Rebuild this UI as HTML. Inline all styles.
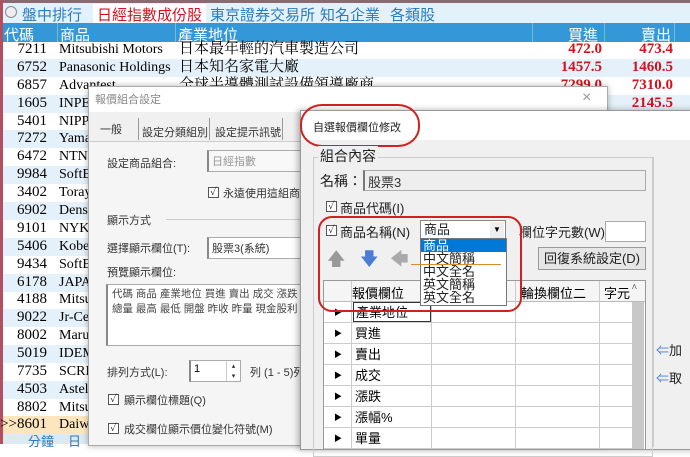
<!DOCTYPE html><html><head><meta charset="utf-8"><style>
*{margin:0;padding:0;box-sizing:border-box}
body{width:690px;height:444px;overflow:hidden;position:relative;background:#fff;font-family:"Liberation Serif","Noto Serif CJK SC",serif}
.a{position:absolute;white-space:nowrap}
.s{font-family:"Liberation Sans","Noto Sans CJK TC",sans-serif}
.row{position:absolute;left:3px;width:687px;height:17.9px;font-size:14px;line-height:17.9px}
.row .c{position:absolute;right:643px;font-size:15px}
.row .n{position:absolute;left:56px}
.row .b{position:absolute;right:88px;color:#d4121c;font-weight:bold;font-size:15px}
.row .e{position:absolute;right:17px;color:#d4121c;font-weight:bold;font-size:15px}
.cb{position:absolute;width:11px;height:11px;border:1px solid #555;background:#fff;font-size:10px;line-height:9px;text-align:center;color:#000}
.gr{position:absolute;left:0;width:323px;height:21px;border-bottom:1px solid #ccc;font-size:13px;line-height:21px}
</style></head><body>
<div class="a" style="left:0;top:0;width:690px;height:3px;background:#8a6a70"></div>
<div class="a" style="left:0;top:0;width:3px;height:444px;background:#b05060"></div>
<div class="a" style="left:3px;top:3px;width:687px;height:20px;background:#e3f1fb"></div>
<div class="a" style="left:5px;top:6px;width:12px;height:12px;border-radius:6px;border:1px solid #889;background:#eee"></div>
<div class="a s" style="left:22px;top:4px;font-size:15px;color:#2a7bbf">盤中排行</div>
<div class="a s" style="left:93px;top:4px;font-size:15px;color:#d4121c;background:#fff;padding:0 4px">日經指數成份股</div>
<div class="a s" style="left:210px;top:4px;font-size:15px;color:#2a7bbf">東京證券交易所</div>
<div class="a s" style="left:320px;top:4px;font-size:15px;color:#2a7bbf">知名企業</div>
<div class="a s" style="left:390px;top:4px;font-size:15px;color:#2a7bbf">各類股</div>
<div class="a" style="left:3px;top:23px;width:687px;height:19px;background:#3498d8"></div>
<div class="a s" style="left:4px;top:24px;font-size:15px;color:#fff">代碼</div>
<div class="a s" style="left:60px;top:24px;font-size:15px;color:#fff">商品</div>
<div class="a s" style="left:178px;top:24px;font-size:15px;color:#fff">產業地位</div>
<div class="a s" style="left:568px;top:24px;font-size:15px;color:#fff">買進</div>
<div class="a s" style="left:641px;top:24px;font-size:15px;color:#fff">賣出</div>
<div class="a" style="left:57px;top:23px;width:1px;height:19px;background:#7bc"></div>
<div class="a" style="left:175px;top:23px;width:1px;height:19px;background:#7bc"></div>
<div class="a" style="left:532px;top:23px;width:1px;height:19px;background:#7bc"></div>
<div class="a" style="left:604px;top:23px;width:1px;height:19px;background:#7bc"></div>
<div class="a" style="left:674px;top:23px;width:1px;height:19px;background:#7bc"></div>

<div class="row" style="top:41px"><span class="c">7211</span><span class="n">Mitsubishi Motors</span><span class="n" style="left:176px;font-size:15px">日本最年輕的汽車製造公司</span><span class="b">472.0</span><span class="e">473.4</span></div>
<div class="row" style="top:59px;background:#e5f1fa"><span class="c">6752</span><span class="n">Panasonic Holdings</span><span class="n" style="left:176px;font-size:15px">日本知名家電大廠</span><span class="b">1457.5</span><span class="e">1460.5</span></div>
<div class="row" style="top:77px"><span class="c">6857</span><span class="n">Advantest</span><span class="n" style="left:176px;font-size:15px">全球半導體測試設備領導廠商</span><span class="b">7299.0</span><span class="e">7310.0</span></div>
<div class="row" style="top:95px;background:#e5f1fa"><span class="c">1605</span><span class="n">INPEX</span><span class="e">2145.5</span></div>
<div class="row" style="top:113px"><span class="c">5401</span><span class="n">NIPPON</span></div>
<div class="row" style="top:130px;background:#e5f1fa"><span class="c">7272</span><span class="n">Yamaha</span></div>
<div class="row" style="top:148px"><span class="c">6472</span><span class="n">NTN</span></div>
<div class="row" style="top:166px;background:#e5f1fa"><span class="c">9984</span><span class="n">SoftBank</span></div>
<div class="row" style="top:184px"><span class="c">3402</span><span class="n">Toray</span></div>
<div class="row" style="top:202px;background:#e5f1fa"><span class="c">6902</span><span class="n">Denso</span></div>
<div class="row" style="top:220px"><span class="c">9101</span><span class="n">NYK</span></div>
<div class="row" style="top:238px;background:#e5f1fa"><span class="c">5406</span><span class="n">Kobe</span></div>
<div class="row" style="top:256px"><span class="c">9434</span><span class="n">SoftBank</span></div>
<div class="row" style="top:274px;background:#e5f1fa"><span class="c">6178</span><span class="n">JAPAN</span></div>
<div class="row" style="top:291px"><span class="c">4188</span><span class="n">Mitsubishi</span></div>
<div class="row" style="top:309px;background:#e5f1fa"><span class="c">9022</span><span class="n">Jr-Central</span></div>
<div class="row" style="top:327px"><span class="c">8002</span><span class="n">Marubeni</span></div>
<div class="row" style="top:345px;background:#e5f1fa"><span class="c">5019</span><span class="n">IDEMITSU</span></div>
<div class="row" style="top:363px"><span class="c">7735</span><span class="n">SCREEN</span></div>
<div class="row" style="top:381px;background:#e5f1fa"><span class="c">4503</span><span class="n">Astellas</span></div>
<div class="row" style="top:399px"><span class="c">8802</span><span class="n">Mitsui</span></div>
<div class="row" style="top:416px;background:#fde6bd"><span class="c">&gt;&gt;8601</span><span class="n">Daiwa</span></div>
<div class="a" style="left:3px;top:434px;width:687px;height:10px;background:#dde9f3"></div>
<div class="a s" style="left:28px;top:431px;font-size:13px;color:#2a7bbf">分鐘</div>
<div class="a s" style="left:68px;top:431px;font-size:13px;color:#2a7bbf">日</div>

<!-- dialog 1 -->
<div class="a" style="left:88px;top:86px;width:520px;height:360px;background:#f5f5f5;border:1px solid #aaa;box-shadow:0 0 6px rgba(0,0,0,.3)"></div>
<div class="a" style="left:89px;top:87px;width:518px;height:25px;background:#fff"></div>
<div class="a s" style="left:95px;top:91px;font-size:11px;color:#888">報價組合設定</div>
<div class="a s" style="left:582px;top:89px;font-size:16px;color:#999">×</div>
<div class="a" style="left:89px;top:112px;width:518px;height:30px;background:#f0f0f0;border-bottom:1px solid #ccc"></div>
<div class="a s" style="left:100px;top:121px;font-size:11px;color:#333">一般</div>
<div class="a" style="left:138px;top:118px;width:1px;height:22px;background:#999"></div>
<div class="a s" style="left:142px;top:124px;font-size:11px;color:#333">設定分類組別</div>
<div class="a" style="left:209px;top:118px;width:1px;height:22px;background:#999"></div>
<div class="a s" style="left:215px;top:124px;font-size:11px;color:#333">設定提示訊號</div>
<div class="a" style="left:282px;top:118px;width:1px;height:22px;background:#999"></div>
<div class="a s" style="left:107px;top:155px;font-size:11px;color:#333">設定商品組合:</div>
<div class="a s" style="left:207px;top:150px;width:100px;height:22px;border:1px solid #aaa;border-left:2px solid #888;background:#f8f8f8;font-size:11px;color:#999;padding:2px 3px">日經指數</div>
<div class="cb" style="left:208px;top:187px">✓</div>
<div class="a s" style="left:223px;top:185px;font-size:11px;color:#333">永遠使用這組商品</div>
<div class="a s" style="left:107px;top:212px;font-size:11px;color:#333">顯示方式</div>
<div class="a" style="left:166px;top:219px;width:140px;height:1px;background:#ccc"></div>
<div class="a s" style="left:107px;top:240px;font-size:11px;color:#333">選擇顯示欄位(T):</div>
<div class="a s" style="left:207px;top:237px;width:100px;height:22px;border:1px solid #aaa;border-left:2px solid #888;background:#fff;font-size:11px;color:#333;padding:2px 3px">股票3(系統)</div>
<div class="a s" style="left:107px;top:264px;font-size:11px;color:#333">預覽顯示欄位:</div>
<div class="a s" style="left:106px;top:284px;width:202px;height:62px;border:1px solid #aaa;border-left:2px solid #888;background:#fff;font-size:10.5px;color:#444;padding:2px 4px;line-height:15px;overflow:hidden">代碼 商品 產業地位 買進 賣出 成交 漲跌 漲<br>總量 最高 最低 開盤 昨收 昨量 現金股利 現</div>
<div class="a s" style="left:107px;top:364px;font-size:11px;color:#333">排列方式(L):</div>
<div class="a s" style="left:189px;top:360px;width:52px;height:22px;border:1px solid #aaa;border-left:2px solid #888;background:#fff;font-size:11px;padding:2px 3px">1</div>
<div class="a" style="left:226px;top:361px;width:14px;height:20px;border-left:1px solid #ccc;font-size:7px;text-align:center;line-height:10px;color:#333">▴<br>▾</div>
<div class="a s" style="left:250px;top:364px;font-size:11px;color:#333">列 (1 - 5)列</div>
<div class="cb" style="left:108px;top:394px">✓</div>
<div class="a s" style="left:124px;top:392px;font-size:11px;color:#333">顯示欄位標題(Q)</div>
<div class="cb" style="left:108px;top:423px">✓</div>
<div class="a s" style="left:124px;top:421px;font-size:11px;color:#333">成交欄位顯示價位變化符號(M)</div>

<!-- dialog 2 -->
<div class="a" style="left:300px;top:110px;width:400px;height:340px;background:#f0f0f0;border:1px solid #999;box-shadow:-2px 0 6px rgba(0,0,0,.3)"></div>
<div class="a" style="left:301px;top:111px;width:399px;height:29px;background:#fff"></div>
<div class="a s" style="left:313px;top:119px;font-size:11px;color:#222">自選報價欄位修改</div>
<div class="a" style="left:300px;top:104px;width:120px;height:43px;border:2px solid #d02020;border-radius:22px/20px"></div>
<div class="a" style="left:313px;top:157px;width:340px;height:300px;border:1px solid #ccc"></div>
<div class="a s" style="left:318px;top:146px;font-size:14px;color:#222;background:#f0f0f0;padding:0 2px">組合內容</div>
<div class="a s" style="left:320px;top:171px;font-size:14px;color:#222">名稱：</div>
<div class="a s" style="left:363px;top:170px;width:283px;height:21px;border:1px solid #aaa;border-left:2px solid #777;background:#eee;font-size:13px;color:#333;padding:1px 3px">股票3</div>
<div class="cb" style="left:326px;top:201px">✓</div>
<div class="a s" style="left:340px;top:198px;font-size:13px;color:#222">商品代碼(I)</div>
<div class="cb" style="left:326px;top:225px">✓</div>
<div class="a s" style="left:340px;top:222px;font-size:13px;color:#222">商品名稱(N)</div>
<div class="a s" style="left:420px;top:220px;width:86px;height:20px;border:1px solid #888;background:#fff;font-size:13px;color:#222;padding:0 3px;line-height:18px">商品</div>
<div class="a" style="left:490px;top:222px;width:14px;height:16px;background:#eee;font-size:8px;text-align:center;line-height:16px">▼</div>
<div class="a s" style="left:519px;top:222px;font-size:13px;color:#222">欄位字元數(W)</div>
<div class="a" style="left:605px;top:221px;width:41px;height:21px;border:1px solid #aaa;background:#fff"></div>
<div class="a s" style="left:327px;top:247px;font-size:18px;color:#999">🡅</div>
<div class="a s" style="left:360px;top:247px;font-size:18px;color:#4a7ed6">🡇</div>
<div class="a s" style="left:390px;top:247px;font-size:18px;color:#aaa">🡄</div>
<div class="a s" style="left:538px;top:247px;width:108px;height:23px;border:1px solid #999;background:#e6e6e6;font-size:13px;text-align:center;line-height:21px;color:#222">回復系統設定(D)</div>
<!-- grid -->
<div class="a" style="left:323px;top:280px;width:323px;height:170px;background:#fff;border:1px solid #999;overflow:hidden">
<div class="a" style="left:0;top:0;width:323px;height:21px;background:#f5f5f5;border-bottom:1px solid #bbb"></div>
<div class="a s" style="left:28px;top:2px;font-size:13px">報價欄位</div>
<div class="a s" style="left:197px;top:2px;font-size:13px">輪換欄位二</div>
<div class="a s" style="left:280px;top:2px;font-size:13px">字元</div>
<div class="a" style="left:308px;top:2px;font-size:10px">^</div>
<div class="a" style="left:27px;top:0;width:1px;height:170px;background:#ccc"></div>
<div class="a" style="left:107px;top:0;width:1px;height:170px;background:#ccc"></div>
<div class="a" style="left:191px;top:0;width:1px;height:170px;background:#ccc"></div>
<div class="a" style="left:275px;top:0;width:1px;height:170px;background:#ccc"></div>
<div class="a" style="left:308px;top:21px;width:12px;height:150px;background:#c8c8c8"></div>
<div class="gr" style="top:21px;width:308px"><span class="a" style="left:10px;font-size:8px">▶</span><span class="a s" style="left:29px;top:0;height:20px;width:78px;border:1px solid #333;line-height:19px;padding-left:2px">產業地位</span></div>
<div class="gr s" style="top:42px;width:308px"><span class="a" style="left:10px;font-size:8px">▶</span><span class="a" style="left:31px">買進</span></div>
<div class="gr s" style="top:63px;width:308px"><span class="a" style="left:10px;font-size:8px">▶</span><span class="a" style="left:31px">賣出</span></div>
<div class="gr s" style="top:84px;width:308px"><span class="a" style="left:10px;font-size:8px">▶</span><span class="a" style="left:31px">成交</span></div>
<div class="gr s" style="top:105px;width:308px"><span class="a" style="left:10px;font-size:8px">▶</span><span class="a" style="left:31px">漲跌</span></div>
<div class="gr s" style="top:126px;width:308px"><span class="a" style="left:10px;font-size:8px">▶</span><span class="a" style="left:31px">漲幅%</span></div>
<div class="gr s" style="top:147px;width:308px"><span class="a" style="left:10px;font-size:8px">▶</span><span class="a" style="left:31px">單量</span></div>
</div>
<!-- dropdown list -->
<div class="a s" style="left:420px;top:238px;width:87px;height:68px;border:1px solid #777;background:#fff;font-size:13px;line-height:13px;color:#222">
<div style="background:#0078d7;color:#fff;padding-left:2px">商品</div>
<div style="padding-left:2px">中文簡稱</div>
<div style="padding-left:2px">中文全名</div>
<div style="padding-left:2px">英文簡稱</div>
<div style="padding-left:2px">英文全名</div>
</div>
<div class="a" style="left:411px;top:264px;width:90px;height:1px;background:#e08a30"></div>
<div class="a" style="left:318px;top:216px;width:204px;height:96px;border:2px solid #d02020;border-radius:14px"></div>
<div class="a" style="left:653px;top:157px;width:1px;height:290px;background:#ccc"></div>
<div class="a s" style="left:656px;top:340px;font-size:13px;color:#222"><span style="color:#4a7ed6">⇐</span>加</div>
<div class="a s" style="left:656px;top:368px;font-size:13px;color:#222"><span style="color:#4a7ed6">⇐</span>取</div>
</body></html>
